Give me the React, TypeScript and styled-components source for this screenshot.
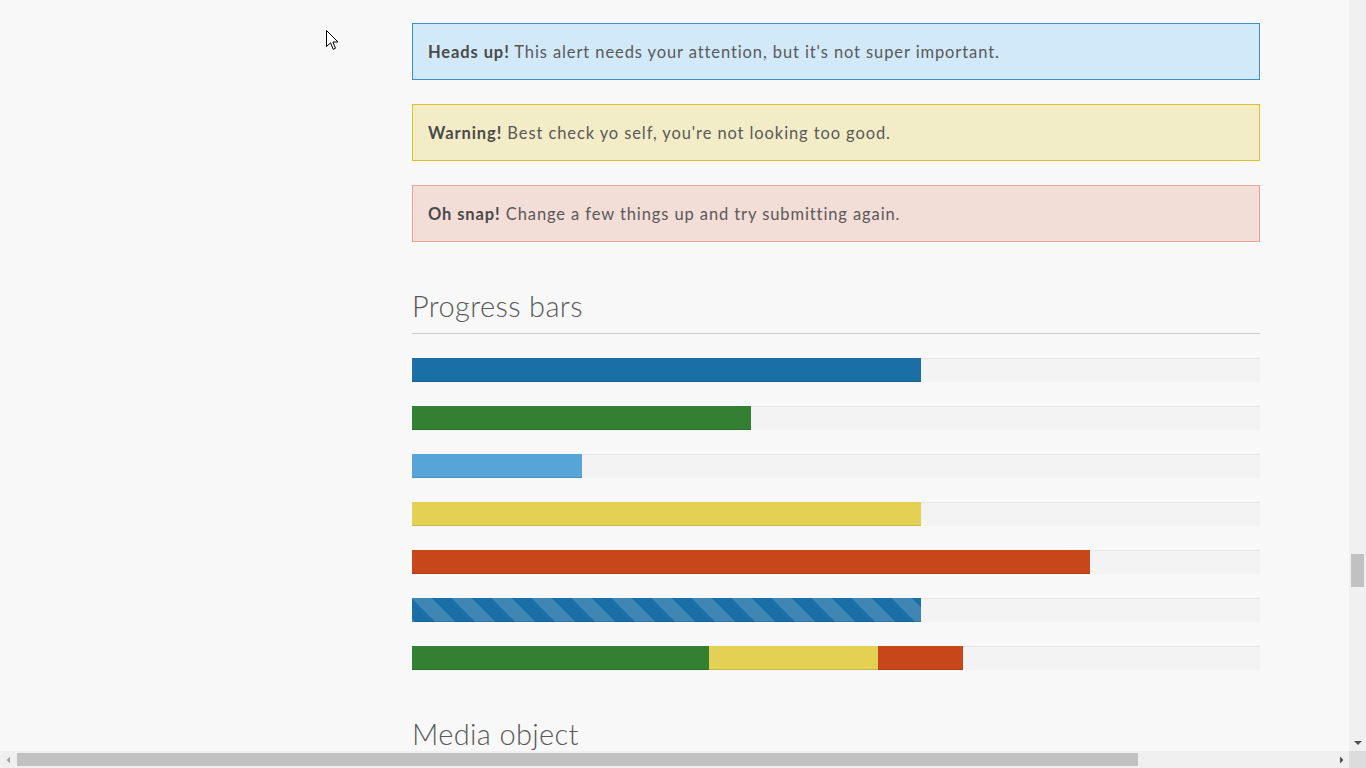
import React from "react";
import styled, { createGlobalStyle, css } from "styled-components";

const GlobalStyle = createGlobalStyle`
  html, body {
    margin: 0;
    padding: 0;
    height: 100%;
    overflow: hidden;
    background: #f8f8f8;
  }
  body {
    font-family: Lato, "Open Sans", "Liberation Sans", sans-serif;
    color: #595959;
  }
`;

const Frame = styled.div`
  display: flex;
  flex-direction: column;
  width: 100vw;
  height: 100vh;
`;

const MainRow = styled.div`
  flex: 1;
  display: flex;
  min-height: 0;
`;

const Viewport = styled.div`
  position: relative;
  flex: 1;
  overflow: hidden;
`;

const Column = styled.div`
  width: 848px;
  margin-left: 412px;
  padding-top: 23px;
  display: flex;
  flex-direction: column;
`;

type AlertKind = "info" | "warning" | "error";

const alertColors: Record<AlertKind, { bg: string; border: string }> = {
  info: { bg: "#d2e9f9", border: "#3d8fcb" },
  warning: { bg: "#f3edc7", border: "#dcc12a" },
  error: { bg: "#f3ded7", border: "#e3a692" },
};

const Alert = styled.div<{ $kind: AlertKind }>`
  box-sizing: border-box;
  height: 57px;
  margin-bottom: 24px;
  padding: 0 15px;
  display: flex;
  align-items: center;
  font-size: 16.5px;
  letter-spacing: 0.9px;
  white-space: pre;
  background: ${(p) => alertColors[p.$kind].bg};
  border: 1px solid ${(p) => alertColors[p.$kind].border};

  strong {
    font-weight: 700;
    color: #4a4a4a;
    letter-spacing: 0.9px;
  }
`;

const SectionTitle = styled.h2`
  margin: 23px 0 24px;
  padding-bottom: 10px;
  font-size: 29px;
  font-weight: 300;
  line-height: 34px;
  letter-spacing: 0.35px;
  color: #595959;
  border-bottom: 1px solid #cccccc;
`;

const Track = styled.div`
  display: flex;
  height: 24px;
  margin-bottom: 24px;
  background: #f3f3f3;
  box-shadow: inset 0 1px 1px rgba(0, 0, 0, 0.06);
  overflow: hidden;
`;

const barColors = {
  blue: "#1a6fa7",
  green: "#338033",
  lightBlue: "#56a4d8",
  yellow: "#e4d154",
  red: "#c7461a",
};

type BarColor = keyof typeof barColors;

const Bar = styled.div<{ $color: BarColor; $striped?: boolean }>`
  height: 100%;
  background-color: ${(p) => barColors[p.$color]};
  box-shadow: inset 0 -1px 0 rgba(0, 0, 0, 0.12);
  ${(p) =>
    p.$striped &&
    css`
      background-image: linear-gradient(
        45deg,
        rgba(255, 255, 255, 0.16) 25%,
        transparent 25%,
        transparent 50%,
        rgba(255, 255, 255, 0.16) 50%,
        rgba(255, 255, 255, 0.16) 75%,
        transparent 75%,
        transparent
      );
      background-size: 40px 40px;
    `}
`;

const Cursor = styled.svg`
  position: absolute;
  left: 326px;
  top: 30px;
`;

const VScroll = styled.div`
  width: 17px;
  background: #f0f0f0;
  display: flex;
  flex-direction: column;
  align-items: center;
`;

const VThumb = styled.div`
  width: 13px;
  height: 33px;
  margin-top: 554px;
  background: #c1c1c1;
`;

const Spacer = styled.div`
  flex: 1;
`;

const ArrowBox = styled.div`
  width: 17px;
  height: 17px;
  display: flex;
  align-items: center;
  justify-content: center;
`;

const HScrollRow = styled.div`
  height: 17px;
  display: flex;
  background: #f0f0f0;
`;

const HTrack = styled.div`
  flex: 1;
  display: flex;
  align-items: center;
`;

const HThumb = styled.div`
  width: 1121px;
  height: 13px;
  background: #c1c1c1;
`;

const Corner = styled.div`
  width: 17px;
  background: #dcdcdc;
`;

const Arrow = ({ dir, color = "#505050" }: { dir: "left" | "right" | "down"; color?: string }) => {
  const pts =
    dir === "left" ? "6,4.5 2.5,8 6,11.5" : dir === "right" ? "4,4.5 7.5,8 4,11.5" : "4,6 12,6 8,10";
  const w = dir === "down" ? 16 : 10;
  return (
    <svg width={w} height={16} viewBox={`0 0 ${w} 16`}>
      <polygon points={pts} fill={color} />
    </svg>
  );
};

const progress: { segments: { color: BarColor; width: number; striped?: boolean }[] }[] = [
  { segments: [{ color: "blue", width: 60 }] },
  { segments: [{ color: "green", width: 40 }] },
  { segments: [{ color: "lightBlue", width: 20 }] },
  { segments: [{ color: "yellow", width: 60 }] },
  { segments: [{ color: "red", width: 80 }] },
  { segments: [{ color: "blue", width: 60, striped: true }] },
  {
    segments: [
      { color: "green", width: 35 },
      { color: "yellow", width: 20 },
      { color: "red", width: 10 },
    ],
  },
];

export default function App() {
  return (
    <Frame>
      <GlobalStyle />
      <MainRow>
        <Viewport>
          <Column>
            <Alert $kind="info">
              <strong>Heads up!</strong> This alert needs your attention, but it's not super important.
            </Alert>
            <Alert $kind="warning">
              <strong>Warning!</strong> Best check yo self, you're not looking too good.
            </Alert>
            <Alert $kind="error">
              <strong>Oh snap!</strong> Change a few things up and try submitting again.
            </Alert>

            <SectionTitle>Progress bars</SectionTitle>
            {progress.map((row, i) => (
              <Track key={i}>
                {row.segments.map((s, j) => (
                  <Bar key={j} $color={s.color} $striped={s.striped} style={{ width: `${s.width}%` }} />
                ))}
              </Track>
            ))}

            <SectionTitle>Media object</SectionTitle>
          </Column>
          <Cursor width="13" height="21" viewBox="0 0 13 21">
            <path
              d="M0.5 0.5 L0.5 16.5 L4.5 12.8 L7.2 19.3 L9.5 18.3 L6.9 12 L12 12 Z"
              fill="#ffffff"
              stroke="#000000"
              strokeWidth="1"
              strokeLinejoin="miter"
            />
          </Cursor>
        </Viewport>
        <VScroll>
          <VThumb />
          <Spacer />
          <ArrowBox>
            <Arrow dir="down" />
          </ArrowBox>
        </VScroll>
      </MainRow>
      <HScrollRow>
        <ArrowBox>
          <Arrow dir="left" color="#a3a3a3" />
        </ArrowBox>
        <HTrack>
          <HThumb />
        </HTrack>
        <ArrowBox>
          <Arrow dir="right" />
        </ArrowBox>
        <Corner />
      </HScrollRow>
    </Frame>
  );
}
